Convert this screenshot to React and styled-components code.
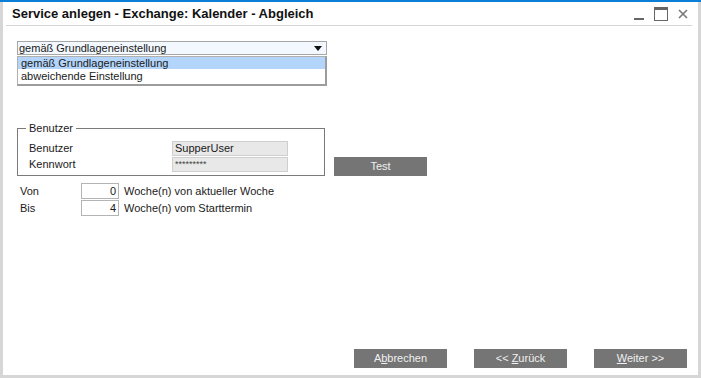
import React from 'react'
import styled, { createGlobalStyle } from 'styled-components'

const GlobalStyle = createGlobalStyle`
  html, body {
    margin: 0;
    padding: 0;
    background: #ffffff;
  }
  body {
    font-family: Tahoma, "Liberation Sans", Arial, sans-serif;
    font-size: 11px;
    color: #1a1a1a;
  }
`

const Window = styled.div`
  width: 701px;
  height: 378px;
  display: flex;
  flex-direction: column;
  box-sizing: border-box;
  background: #fff;
`

const TopStripe = styled.div`
  height: 2px;
  background: #0a7fd6;
  flex: none;
`

const Frame = styled.div`
  flex: 1;
  display: flex;
  flex-direction: column;
  border-left: 3px solid #d6d6d6;
  border-right: 3px solid #d6d6d6;
  border-bottom: 3px solid #d6d6d6;
  min-height: 0;
`

const TitleBar = styled.div`
  height: 23px;
  display: flex;
  align-items: center;
  justify-content: space-between;
  margin: 0 6px 0 3px;
  padding-left: 6px;
  border-bottom: 1px solid #d4d4d4;
`

const Title = styled.h1`
  margin: 0;
  font-size: 13px;
  font-weight: bold;
  color: #111;
`

const Controls = styled.div`
  display: flex;
  align-items: center;
  gap: 10px;
  padding-right: 4px;
`

const Body = styled.div`
  flex: 1;
  display: flex;
  flex-direction: column;
  padding: 15px 11px 0 14px;
`

const Combo = styled.div`
  width: 310px;
  display: flex;
  flex-direction: column;
`

const ComboBox = styled.div`
  height: 12px;
  border: 1px solid #a6a6a6;
  background: #f2f8fe;
  display: flex;
  align-items: center;
  justify-content: space-between;
  padding: 0 4px 0 1px;
  line-height: 12px;
`

const List = styled.ul`
  margin: 1px 0 0;
  padding: 0;
  list-style: none;
  border: 1px solid #b0b0b0;
  border-right: 2px solid #9c9c9c;
  border-bottom: 2px solid #9c9c9c;
  height: 27px;
`

const ListItem = styled.li`
  height: 12px;
  line-height: 12px;
  padding-left: 3px;
  margin-bottom: 1px;
  background: ${p => (p.selected ? '#b3d5fb' : 'transparent')};
`

const GroupLine = styled.div`
  display: flex;
  align-items: flex-end;
  gap: 9px;
  margin-top: 37px;
`

const Group = styled.fieldset`
  margin: 0;
  width: 308px;
  height: 53px;
  box-sizing: border-box;
  border: 1px solid #7a7a7a;
  padding: 6px 11px 0 11px;
`

const Legend = styled.legend`
  padding: 0 3px;
  margin-left: -3px;
  line-height: 11px;
`

const GroupRow = styled.div`
  display: grid;
  grid-template-columns: 143px 116px;
  align-items: center;
  height: 16px;
`

const ReadOnly = styled.div`
  height: 13px;
  border: 1px solid #cfcfcf;
  background: #e8e8e8;
  padding-left: 2px;
  line-height: 13px;
  font-size: ${p => (p.small ? '9px' : '11px')};
  color: ${p => (p.small ? '#444' : 'inherit')};
`

const GreyButton = styled.button`
  width: 93px;
  height: 19px;
  border: none;
  background: #757575;
  color: #f0f0f0;
  font-family: inherit;
  font-size: 11px;
  padding: 0;
  line-height: 19px;
  cursor: pointer;
  u {
    text-decoration: underline;
  }
`

const RangeGrid = styled.div`
  margin-top: 7px;
  margin-left: 3px;
  display: grid;
  grid-template-columns: 56px 38px auto;
  column-gap: 5px;
  row-gap: 1px;
  align-items: center;
`

const NumBox = styled.div`
  box-sizing: border-box;
  height: 16px;
  border: 1px solid #b4b4b4;
  text-align: right;
  padding-right: 2px;
  line-height: 14px;
`

const Footer = styled.div`
  margin-top: auto;
  display: flex;
  justify-content: flex-end;
  gap: 27px;
  padding: 0 0 7px;
`

const Icon = styled.svg`
  display: block;
`

export default function App() {
  return (
    <>
      <GlobalStyle />
      <Window>
        <TopStripe />
        <Frame>
          <TitleBar>
            <Title>Service anlegen - Exchange: Kalender - Abgleich</Title>
            <Controls>
              <Icon width="10" height="14" viewBox="0 0 10 14">
                <rect x="0" y="11" width="10" height="2" fill="#666" />
              </Icon>
              <Icon width="14" height="14" viewBox="0 0 14 14">
                <rect x="0.5" y="0.5" width="13" height="13" fill="none" stroke="#666" />
                <rect x="0" y="0" width="14" height="3" fill="#666" />
              </Icon>
              <Icon width="10" height="10" viewBox="0 0 10 10">
                <path d="M1 1 L9 9 M9 1 L1 9" stroke="#777" strokeWidth="1.6" />
              </Icon>
            </Controls>
          </TitleBar>
          <Body>
            <Combo>
              <ComboBox>
                <span>gemäß Grundlageneinstellung</span>
                <Icon width="8" height="5" viewBox="0 0 8 5">
                  <path d="M0 0 H8 L4 5 Z" fill="#111" />
                </Icon>
              </ComboBox>
              <List>
                <ListItem selected>gemäß Grundlageneinstellung</ListItem>
                <ListItem>abweichende Einstellung</ListItem>
              </List>
            </Combo>

            <GroupLine>
              <Group>
                <Legend>Benutzer</Legend>
                <GroupRow>
                  <span>Benutzer</span>
                  <ReadOnly>SupperUser</ReadOnly>
                </GroupRow>
                <GroupRow>
                  <span>Kennwort</span>
                  <ReadOnly small>*********</ReadOnly>
                </GroupRow>
              </Group>
              <GreyButton>Test</GreyButton>
            </GroupLine>

            <RangeGrid>
              <span>Von</span>
              <NumBox>0</NumBox>
              <span>Woche(n) von aktueller Woche</span>
              <span>Bis</span>
              <NumBox>4</NumBox>
              <span>Woche(n) vom Starttermin</span>
            </RangeGrid>

            <Footer>
              <GreyButton>A<u>b</u>brechen</GreyButton>
              <GreyButton>&lt;&lt; <u>Z</u>urück</GreyButton>
              <GreyButton><u>W</u>eiter &gt;&gt;</GreyButton>
            </Footer>
          </Body>
        </Frame>
      </Window>
    </>
  )
}
